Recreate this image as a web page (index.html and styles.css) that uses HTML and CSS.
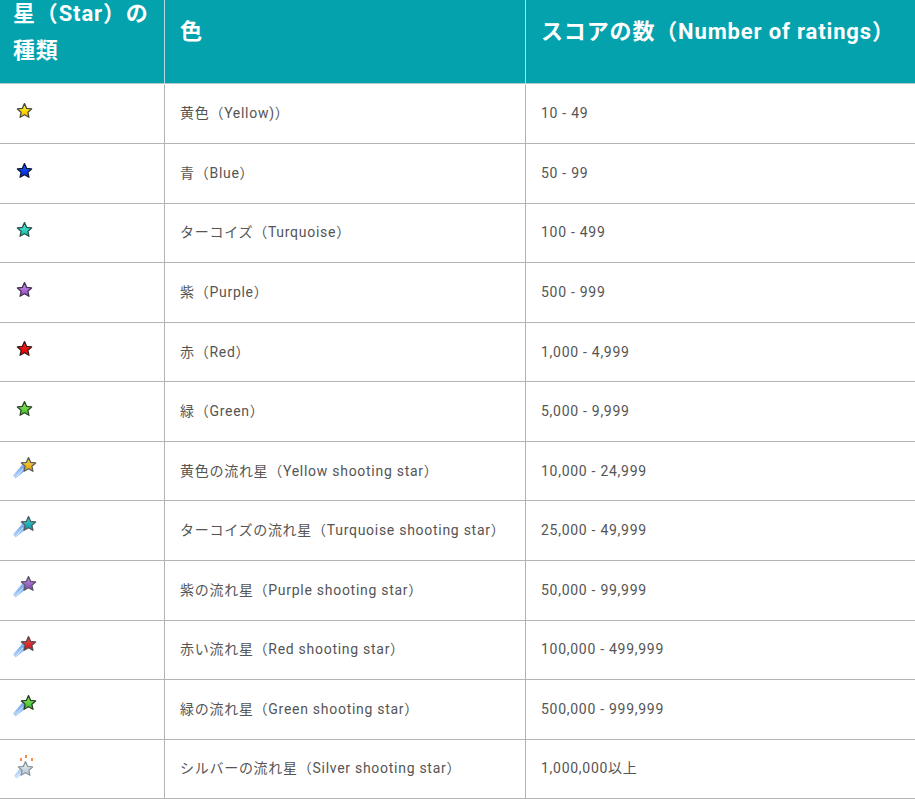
FILE: index.html
```html
<!DOCTYPE html>
<html lang="ja">
<head>
<meta charset="utf-8">
<title>星の種類</title>
<link rel="stylesheet" href="styles.css">
</head>
<body>
<svg class="defs" width="0" height="0" aria-hidden="true">
  <defs>
    <linearGradient id="gy" x1="0" y1="0" x2="0" y2="1"><stop offset="0" stop-color="#fff46a"/><stop offset=".55" stop-color="#ffdc00"/><stop offset="1" stop-color="#f0b000"/></linearGradient>
    <linearGradient id="gb" x1="0" y1="0" x2="0" y2="1"><stop offset="0" stop-color="#1a62ff"/><stop offset="1" stop-color="#0420d0"/></linearGradient>
    <linearGradient id="gt" x1="0" y1="0" x2="0" y2="1"><stop offset="0" stop-color="#60f0dc"/><stop offset="1" stop-color="#08b8a4"/></linearGradient>
    <linearGradient id="gp" x1="0" y1="0" x2="0" y2="1"><stop offset="0" stop-color="#cf98ec"/><stop offset="1" stop-color="#8f44c4"/></linearGradient>
    <linearGradient id="gr" x1="0" y1="0" x2="0" y2="1"><stop offset="0" stop-color="#ff2020"/><stop offset="1" stop-color="#d80000"/></linearGradient>
    <linearGradient id="gg" x1="0" y1="0" x2="0" y2="1"><stop offset="0" stop-color="#96f060"/><stop offset="1" stop-color="#40b828"/></linearGradient>
    <linearGradient id="gsy" x1="0" y1="0" x2="0" y2="1"><stop offset="0" stop-color="#fad74a"/><stop offset="1" stop-color="#e0a010"/></linearGradient>
    <linearGradient id="gst" x1="0" y1="0" x2="0" y2="1"><stop offset="0" stop-color="#48d0d4"/><stop offset="1" stop-color="#0c94a0"/></linearGradient>
    <linearGradient id="gsp" x1="0" y1="0" x2="0" y2="1"><stop offset="0" stop-color="#c090e0"/><stop offset="1" stop-color="#8048b0"/></linearGradient>
    <linearGradient id="gsr" x1="0" y1="0" x2="0" y2="1"><stop offset="0" stop-color="#f04848"/><stop offset="1" stop-color="#c01820"/></linearGradient>
    <linearGradient id="gsg" x1="0" y1="0" x2="0" y2="1"><stop offset="0" stop-color="#8cf060"/><stop offset="1" stop-color="#38b430"/></linearGradient>
    <linearGradient id="gss" x1="0" y1="0" x2="0" y2="1"><stop offset="0" stop-color="#f2f6f8"/><stop offset="1" stop-color="#b0c2cc"/></linearGradient>
    <linearGradient id="trail" x1="1" y1="0" x2="0" y2="1"><stop offset="0" stop-color="#5f9cec"/><stop offset="1" stop-color="#bcd8f8"/></linearGradient>
    <symbol id="star" viewBox="0 0 16 16"><path d="M8 1.500 10 6l4.700.5-3.500 3.200 1 4.700L8 12l-4.200 2.400 1-4.700L1.300 6.500 6 6z" stroke-linejoin="round"/></symbol>
    <symbol id="shoot" viewBox="0 0 24 24"><path d="M9 10 0 20.500l2.500 3L15 13.500z" fill="url(#trail)"/><path d="M10 14 3.500 21.500" stroke="#dcebfc" stroke-width="1"/></symbol>
  </defs>
</svg>
<table class="ratings">
  <thead>
    <tr>
      <th class="col-star"><span class="wrap">星（Star）の種類</span></th>
      <th class="col-color">色</th>
      <th>スコアの数（Number of ratings）</th>
    </tr>
  </thead>
  <tbody>
    <tr><td class="icon"><svg class="star" fill="url(#gy)" stroke="#4a4a3a"><use href="#star"/></svg></td><td>黄色（Yellow)）</td><td>10 - 49</td></tr>
    <tr><td class="icon"><svg class="star" fill="url(#gb)" stroke="#10183a"><use href="#star"/></svg></td><td>青（Blue）</td><td>50 - 99</td></tr>
    <tr><td class="icon"><svg class="star" fill="url(#gt)" stroke="#24504c"><use href="#star"/></svg></td><td>ターコイズ（Turquoise）</td><td>100 - 499</td></tr>
    <tr><td class="icon"><svg class="star" fill="url(#gp)" stroke="#443050"><use href="#star"/></svg></td><td>紫（Purple）</td><td>500 - 999</td></tr>
    <tr><td class="icon"><svg class="star" fill="url(#gr)" stroke="#401818"><use href="#star"/></svg></td><td>赤（Red）</td><td>1,000 - 4,999</td></tr>
    <tr><td class="icon"><svg class="star" fill="url(#gg)" stroke="#2c4a28"><use href="#star"/></svg></td><td>緑（Green）</td><td>5,000 - 9,999</td></tr>
    <tr><td class="icon"><span class="shooting"><svg class="trail"><use href="#shoot"/></svg><svg class="head" fill="url(#gsy)" stroke="#5c5c58"><use href="#star"/></svg></span></td><td>黄色の流れ星（Yellow shooting star）</td><td>10,000 - 24,999</td></tr>
    <tr><td class="icon"><span class="shooting"><svg class="trail"><use href="#shoot"/></svg><svg class="head" fill="url(#gst)" stroke="#4c5c60"><use href="#star"/></svg></span></td><td>ターコイズの流れ星（Turquoise shooting star）</td><td>25,000 - 49,999</td></tr>
    <tr><td class="icon"><span class="shooting"><svg class="trail"><use href="#shoot"/></svg><svg class="head" fill="url(#gsp)" stroke="#5c5464"><use href="#star"/></svg></span></td><td>紫の流れ星（Purple shooting star）</td><td>50,000 - 99,999</td></tr>
    <tr><td class="icon"><span class="shooting"><svg class="trail"><use href="#shoot"/></svg><svg class="head" fill="url(#gsr)" stroke="#5c4a4c"><use href="#star"/></svg></span></td><td>赤い流れ星（Red shooting star）</td><td>100,000 - 499,999</td></tr>
    <tr><td class="icon"><span class="shooting"><svg class="trail"><use href="#shoot"/></svg><svg class="head" fill="url(#gsg)" stroke="#2c4028"><use href="#star"/></svg></span></td><td>緑の流れ星（Green shooting star）</td><td>500,000 - 999,999</td></tr>
    <tr><td class="icon"><span class="shooting silver"><svg class="trail"><use href="#shoot"/></svg><svg class="head" fill="url(#gss)" stroke="#8c98a0"><use href="#star"/></svg><i class="spark s1"></i><i class="spark s2"></i><i class="spark s3"></i></span></td><td>シルバーの流れ星（Silver shooting star）</td><td>1,000,000以上</td></tr>
  </tbody>
</table>
</body>
</html>
```
FILE: styles.css
```css
html, body {
  margin: 0;
  padding: 0;
  background: #fff;
}
body {
  font-family: Roboto, "Noto Sans CJK JP", sans-serif;
  font-size: 14px;
  color: #555;
  letter-spacing: 0.72px;
  overflow: hidden;
}
.defs {
  position: absolute;
}
.ratings {
  width: 915px;
  table-layout: fixed;
  border-collapse: separate;
  border-spacing: 0;
}
.ratings th {
  box-sizing: border-box;
  height: 84.6px;
  background: #04a2ad;
  color: #fff;
  font-size: 22px;
  font-weight: 700;
  letter-spacing: 0.85px;
  line-height: 36px;
  text-align: left;
  vertical-align: top;
  padding: 14px 15px 0;
  border-right: 1px solid #b5d8dc;
  border-bottom: 1px solid #fff;
  box-shadow: inset 0 -1px 0 #b5c9cc;
}
.ratings th:last-child,
.ratings td:last-child {
  border-right: 0;
}
.ratings th.col-star {
  width: 165px;
  padding: 0 15px 0 13px;
}
.wrap {
  display: block;
  margin-top: -5px;
  line-height: 37px;
}
.ratings th.col-color {
  width: 361px;
}
.ratings td {
  box-sizing: border-box;
  height: 59.55px;
  padding: 0 15px 1px;
  border-right: 1px solid #b3b3b3;
  border-bottom: 1px solid #b3b3b3;
  vertical-align: middle;
  line-height: 20px;
  white-space: nowrap;
}
.ratings td.icon {
  vertical-align: top;
  padding: 0;
}
.star {
  display: block;
  width: 17px;
  height: 17px;
  margin: 17.5px 0 0 16px;
  stroke-width: 1.2px;
}
.shooting {
  display: block;
  position: relative;
  width: 24px;
  height: 24px;
  margin: 13px 0 0 13px;
}
.shooting svg {
  position: absolute;
}
.trail {
  left: 0;
  top: 0;
  width: 24px;
  height: 24px;
}
.head {
  left: 7px;
  top: 1px;
  width: 17px;
  height: 17px;
  stroke-width: 1.2px;
}
.silver .head {
  top: 7px;
  left: 4px;
}
.silver .trail {
  top: 2px;
  left: 1px;
  opacity: 0.7;
}
.spark {
  position: absolute;
  width: 2px;
  height: 3px;
  background: #f2904a;
}
.s1 { left: 12px; top: 2px; }
.s2 { left: 7px; top: 5px; }
.s3 { left: 18px; top: 5px; }
```
